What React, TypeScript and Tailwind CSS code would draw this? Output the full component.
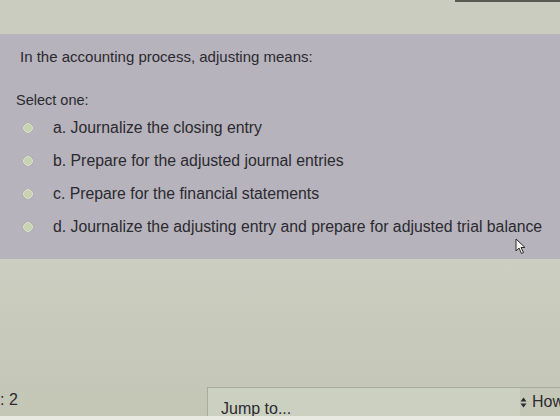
import { useState } from 'react';

const OPTIONS = [
  { key: 'a', label: 'Journalize the closing entry' },
  { key: 'b', label: 'Prepare for the adjusted journal entries' },
  { key: 'c', label: 'Prepare for the financial statements' },
  { key: 'd', label: 'Journalize the adjusting entry and prepare for adjusted trial balance' },
];

// small pointer arrow shown over the last answer
function Cursor() {
  return (
    <svg width="12" height="17" viewBox="0 0 12 17" className="absolute left-[515px] top-[238px]">
      <path d="M1 1 L1 13 L4 10 L6.5 15.5 L8.5 14.5 L6 9.5 L10 9.5 Z" fill="#f4f4f0" stroke="#2b2b2b" strokeWidth="1" />
    </svg>
  );
}

function SortArrows() {
  return (
    <svg width="7" height="11" viewBox="0 0 7 11">
      <path d="M3.5 0.5 L6.5 4.5 L0.5 4.5 Z" fill="#2b2a2f" />
      <path d="M3.5 10.5 L6.5 6.5 L0.5 6.5 Z" fill="#2b2a2f" />
    </svg>
  );
}

export default function App() {
  const [answer, setAnswer] = useState<string | null>(null);

  return (
    <div className="relative w-[560px] h-[420px] overflow-hidden flex flex-col bg-[#c9ccbe] text-[#2b2a2f] font-['Liberation_Sans',Arial,sans-serif]">
      {/* strip above the question box */}
      <div className="h-[34px] flex justify-end">
        <div className="w-[105px] h-[2px] bg-[#5b5a52]" />
      </div>

      {/* question box */}
      <div className="h-[225px] bg-[#b6b3bc] pl-[20px] pt-[14px]">
        <p className="text-[15px] leading-[18px]">In the accounting process, adjusting means:</p>
        <p className="mt-[25px] -ml-[4px] text-[14.5px] leading-[18px]">Select one:</p>
        <div className="mt-[2px] flex flex-col">
          {OPTIONS.map((o) => (
            <label key={o.key} className="h-[33px] flex items-center cursor-pointer">
              <span className="w-[16px] flex justify-center">
                <input
                  type="radio"
                  name="q"
                  checked={answer === o.key}
                  onChange={() => setAnswer(o.key)}
                  className="appearance-none w-[10px] h-[10px] rounded-full bg-[#c8d3b2] border border-[#dfe4d2] shadow-[0_0_1px_#8f9a80]"
                />
              </span>
              <span className="ml-[17px] text-[15.8px] leading-[20px]">
                {o.key}. {o.label}
              </span>
            </label>
          ))}
        </div>
      </div>

      {/* footer navigation */}
      <div className="flex-1 flex flex-col justify-end bg-gradient-to-b from-[#cbcec0] to-[#c3c6b5]">
        <div className="flex items-end">
          <div className="w-[207px] shrink-0 pb-[6px] text-[16px] leading-[20px] whitespace-nowrap">: 2</div>
          <div className="w-[313px] shrink-0 h-[29px] border-t border-l border-[#a9ab9d] bg-[#ccd0c1] pl-[13px] pt-[12px] text-[16px] leading-[18px]">
            Jump to...
          </div>
          <div className="flex-1 h-[29px] border-t border-[#a9ab9d] pb-[4px] flex items-end gap-[5px] text-[16px] leading-[20px] whitespace-nowrap">
            <span className="pb-[4px]">
              <SortArrows />
            </span>
            <span>How</span>
          </div>
        </div>
        <div className="h-[4px] bg-[#e9ebe2]" />
      </div>

      <Cursor />
    </div>
  );
}
